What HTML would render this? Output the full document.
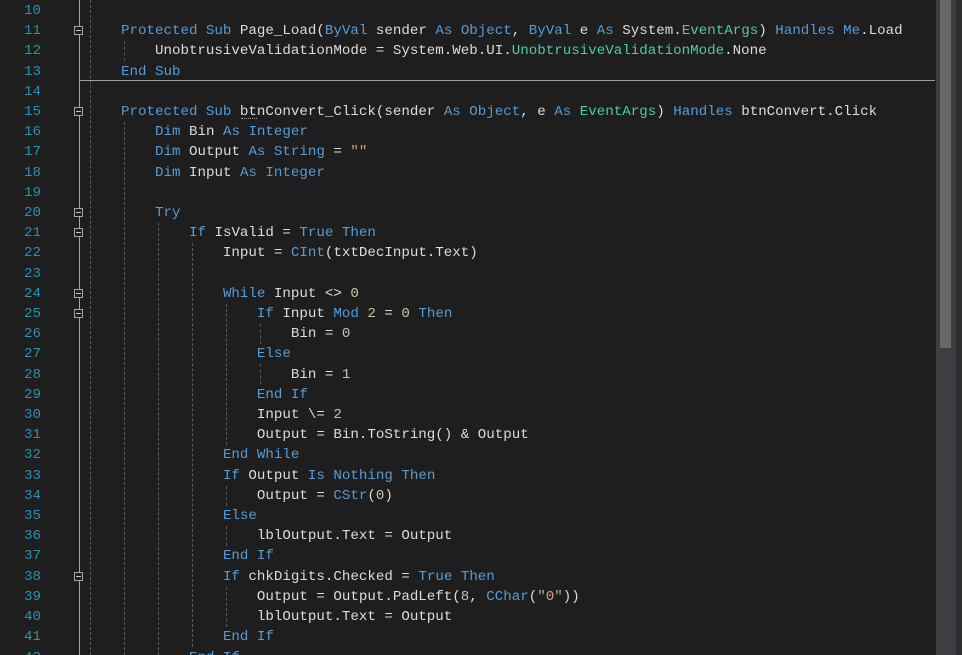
<!DOCTYPE html>
<html><head><meta charset="utf-8"><style>
html,body{margin:0;padding:0;background:#1e1e1e;width:962px;height:655px;overflow:hidden}
#c{position:absolute;left:0;top:0;width:962px;height:655px;overflow:hidden}
.ln,.code{position:absolute;top:1px;margin:0;font-family:"Liberation Mono",monospace;font-size:14.17px;line-height:20.2px;white-space:pre}
.ln{left:0;width:41px;text-align:right;color:#2b91af}
.code{left:87px;color:#dcdcdc}
.k{color:#569cd6}.t{color:#4ec9b0}.s{color:#d69d85}.n{color:#b5cea8}
.g{position:absolute;width:0;border-left:1px dashed #5a5a5a}
.fb{position:absolute;left:74px;width:9px;height:9px;border:1px solid #a5a5a5;background:#1e1e1e;box-sizing:border-box}
.fb:after{content:"";position:absolute;left:1px;top:3px;width:5px;height:1px;background:#c8c8c8}
</style></head><body><div id="c">
<div style="position:absolute;left:79px;top:0;width:1px;height:655px;background:#a5a5a5"></div>
<div class="g" style="left:90px;top:0;height:655px"></div>
<div style="position:absolute;left:80px;top:80px;width:855px;height:1px;background:#a0a0a0"></div>
<div class="g" style="left:124px;top:41px;height:20px"></div>
<div class="g" style="left:124px;top:122px;height:533px"></div>
<div class="g" style="left:158px;top:223px;height:432px"></div>
<div class="g" style="left:192px;top:243px;height:404px"></div>
<div class="g" style="left:226px;top:304px;height:141px"></div>
<div class="g" style="left:226px;top:486px;height:20px"></div>
<div class="g" style="left:226px;top:526px;height:20px"></div>
<div class="g" style="left:226px;top:587px;height:40px"></div>
<div class="g" style="left:260px;top:324px;height:20px"></div>
<div class="g" style="left:260px;top:364px;height:20px"></div>
<div class="fb" style="top:26px"></div>
<div class="fb" style="top:107px"></div>
<div class="fb" style="top:208px"></div>
<div class="fb" style="top:228px"></div>
<div class="fb" style="top:289px"></div>
<div class="fb" style="top:309px"></div>
<div class="fb" style="top:572px"></div>
<div style="position:absolute;left:241px;top:118px;width:16px;height:2px;border-top:1px dotted #a0a0a0"></div>
<pre class="ln">10
11
12
13
14
15
16
17
18
19
20
21
22
23
24
25
26
27
28
29
30
31
32
33
34
35
36
37
38
39
40
41
42</pre>
<pre class="code">
 
    <span class="k">Protected Sub</span> Page_Load(<span class="k">ByVal</span> sender <span class="k">As Object</span>, <span class="k">ByVal</span> e <span class="k">As</span> System.<span class="t">EventArgs</span>) <span class="k">Handles Me</span>.Load
        UnobtrusiveValidationMode = System.Web.UI.<span class="t">UnobtrusiveValidationMode</span>.None
    <span class="k">End Sub</span>

    <span class="k">Protected Sub</span> btnConvert_Click(sender <span class="k">As Object</span>, e <span class="k">As</span> <span class="t">EventArgs</span>) <span class="k">Handles</span> btnConvert.Click
        <span class="k">Dim</span> Bin <span class="k">As Integer</span>
        <span class="k">Dim</span> Output <span class="k">As String</span> = <span class="s">""</span>
        <span class="k">Dim</span> Input <span class="k">As Integer</span>

        <span class="k">Try</span>
            <span class="k">If</span> IsValid = <span class="k">True Then</span>
                Input = <span class="k">CInt</span>(txtDecInput.Text)

                <span class="k">While</span> Input &lt;&gt; <span class="n">0</span>
                    <span class="k">If</span> Input <span class="k">Mod</span> <span class="n">2</span> = <span class="n">0</span> <span class="k">Then</span>
                        Bin = <span class="n">0</span>
                    <span class="k">Else</span>
                        Bin = <span class="n">1</span>
                    <span class="k">End If</span>
                    Input \= <span class="n">2</span>
                    Output = Bin.ToString() &amp; Output
                <span class="k">End While</span>
                <span class="k">If</span> Output <span class="k">Is Nothing Then</span>
                    Output = <span class="k">CStr</span>(<span class="n">0</span>)
                <span class="k">Else</span>
                    lblOutput.Text = Output
                <span class="k">End If</span>
                <span class="k">If</span> chkDigits.Checked = <span class="k">True Then</span>
                    Output = Output.PadLeft(<span class="n">8</span>, <span class="k">CChar</span>(<span class="s">"0"</span>))
                    lblOutput.Text = Output
                <span class="k">End If</span>
            <span class="k">End If</span></pre>
<div style="position:absolute;left:936px;top:0;width:20px;height:655px;background:#3e3e42"></div>
<div style="position:absolute;left:956px;top:0;width:6px;height:655px;background:#2d2d30"></div>
<div style="position:absolute;left:940px;top:0;width:11px;height:348px;background:#686868"></div>
</div></body></html>
